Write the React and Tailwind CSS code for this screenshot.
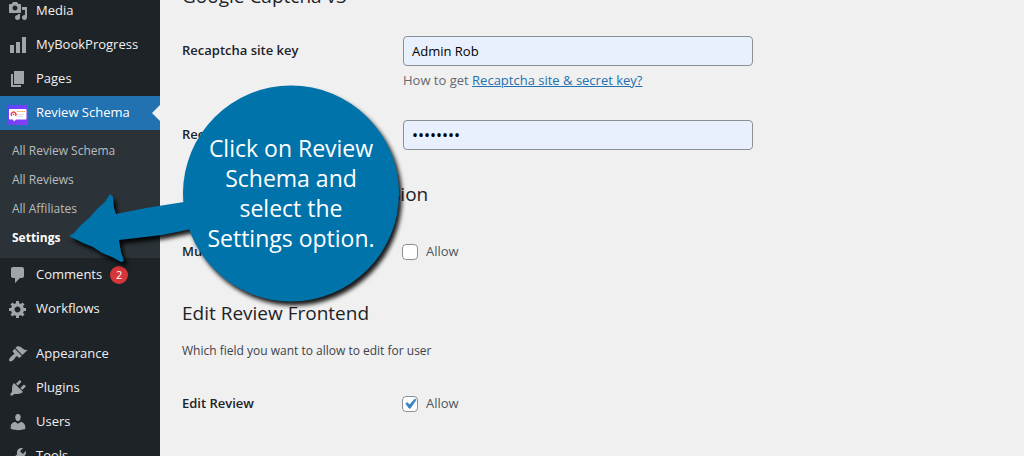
import { useState } from "react";
import clsx from "clsx";

const ICONS = {
    media: "M13 11V4c0-.55-.45-1-1-1h-1.67L9 1H5L3.67 3H2c-.55 0-1 .45-1 1v7c0 .55.45 1 1 1h10c.55 0 1-.45 1-1zM7 4.5c1.38 0 2.5 1.12 2.5 2.5S8.38 9.5 7 9.5 4.5 8.38 4.5 7 5.62 4.5 7 4.5zM14 6h5v10.5c0 1.38-1.12 2.5-2.5 2.5S14 17.88 14 16.5s1.12-2.5 2.5-2.5c.17 0 .34.02.5.05V9h-3V6zm-4 8.05V13h2v3.5c0 1.38-1.12 2.5-2.5 2.5S7 17.88 7 16.5 8.12 14 9.5 14c.17 0 .34.02.5.05z",
    chart: "M18 18V2h-4v16h4zm-6 0V7H8v11h4zm-6 0v-8H2v8h4z",
    page: "M6 15V2h10v13H6zm-1 1h8v2H3V5h2v11z",
    comments: "M5 2h9c1.1 0 2 .9 2 2v7c0 1.1-.9 2-2 2h-2l-5 5v-5H5c-1.1 0-2-.9-2-2V4c0-1.1.9-2 2-2z",
    generic: "M18 12h-2.18c-.17.7-.44 1.35-.81 1.93l1.54 1.54-2.1 2.1-1.54-1.54c-.58.36-1.23.63-1.91.79V19H8v-2.18c-.68-.16-1.33-.43-1.91-.79l-1.54 1.54-2.12-2.12 1.54-1.54c-.36-.58-.63-1.23-.79-1.91H1V9.03h2.17c.16-.7.44-1.35.8-1.94L2.43 5.55l2.1-2.1 1.54 1.54c.58-.37 1.24-.64 1.93-.81V2h3v2.18c.68.16 1.33.43 1.91.79l1.54-1.54 2.12 2.12-1.54 1.54c.36.59.64 1.24.8 1.94H18V12zm-8.5 1.5c1.66 0 3-1.34 3-3s-1.34-3-3-3-3 1.34-3 3 1.34 3 3 3z",
    appearance: "M14.48 11.06L7.41 3.99l1.5-1.5c.5-.56 2.3-.47 3.51.32 1.21.8 1.43 1.28 2.91 2.1 1.18.64 2.45 1.26 4.45.85zm-.71.71L6.7 4.7 4.93 6.47c-.39.39-.39 1.02 0 1.41l1.06 1.06c.39.39.39 1.03 0 1.42-.6.6-1.43 1.11-2.21 1.69-.35.26-.7.53-1.01.84C1.43 14.23.4 16.08 1.4 17.07c.99 1 2.84-.03 4.18-1.36.31-.31.58-.66.85-1.02.57-.78 1.08-1.61 1.69-2.21.39-.39 1.02-.39 1.41 0l1.06 1.06c.39.39 1.02.39 1.41 0z",
    plugins: "M13.11 4.36L9.87 7.6 8 5.73l3.24-3.24c.35-.34 1.05-.2 1.56.32.52.51.66 1.21.31 1.55zm-8 1.77l.91-1.12 9.01 9.01-1.19.84c-.71.71-2.63 1.16-3.82 1.16H6.14L4.9 17.26c-.59.59-1.54.59-2.12 0-.59-.58-.59-1.53 0-2.12l1.24-1.24v-3.88c0-1.13.4-3.19 1.09-3.89zm7.26 3.97l3.24-3.24c.34-.35 1.04-.21 1.55.31.52.51.66 1.21.31 1.55l-3.24 3.25z",
    users: "M10 9.25c-2.27 0-2.73-3.44-2.73-3.44C7 4.02 7.82 2 9.97 2c2.16 0 2.98 2.02 2.71 3.81 0 0-.41 3.44-2.68 3.44zm0 2.57L12.72 10c2.39 0 4.52 2.33 4.52 4.53v2.49s-3.65 1.13-7.24 1.13c-3.65 0-7.24-1.13-7.24-1.13v-2.49c0-2.25 1.94-4.48 4.47-4.48z",
    tools: "M16.68 9.77c-1.34 1.34-3.3 1.67-4.95.99l-5.41 6.52c-.99.99-2.59.99-3.58 0s-.99-2.59 0-3.57l6.52-5.42c-.68-1.65-.35-3.61.99-4.95 1.28-1.28 3.12-1.62 4.72-1.06l-2.89 2.89 2.82 2.82 2.86-2.87c.53 1.58.18 3.39-1.08 4.65zM3.81 16.21c.4.39 1.04.39 1.43 0 .4-.4.4-1.04 0-1.43-.39-.4-1.03-.4-1.43 0-.39.39-.39 1.03 0 1.43z",
};

const SUBMENU = ["All Review Schema", "All Reviews", "All Affiliates", "Settings"];

function SchemaIcon() {
    return (
        <svg viewBox="0 0 20 20" className="mt-1 size-5 shrink-0">
            <defs>
                <linearGradient id="schema-bg" x1="0" y1="0" x2="1" y2="1">
                    <stop offset="0" stopColor="#5b45ff" />
                    <stop offset="1" stopColor="#8a3df2" />
                </linearGradient>
            </defs>
            <rect width="20" height="20" fill="url(#schema-bg)" />
            <path d="M2 4h15.500a1 1 0 0 1 1 1v8.500a1 1 0 0 1-1 1H8l-2 2-1-2H2a1 1 0 0 1-1-1V5a1 1 0 0 1 1-1z" fill="#fff" />
            <path d="M3.800 10.800a2.300 2.300 0 1 1 3.600 0" fill="none" stroke="#f0424f" strokeWidth="1.400" />
            <circle cx="5.600" cy="9.500" r=".8" fill="#f0424f" />
            <path d="M9 6.500h8" stroke="#f7a53a" strokeWidth="1.200" strokeDasharray="1.200 .5" />
            <path d="M9 9.500h7M9 11.500h6" stroke="#dcdce6" strokeWidth="1" />
        </svg>
    );
}

function MenuItem({ icon, label, count, active }) {
    return (
        <a
            href="#"
            className={clsx(
                "relative flex h-[34px] items-center gap-2 pl-2 text-[13px]",
                active ? "bg-[#2271b1] text-white" : "text-[#f0f0f1]"
            )}
        >
            {icon ? (
                <svg viewBox="0 0 20 20" className="size-5 shrink-0" fill="#a0a5aa">
                    <path d={ICONS[icon]} />
                </svg>
            ) : (
                <SchemaIcon />
            )}
            <span>{label}</span>
            {count && (
                <span className="flex size-[18px] items-center justify-center rounded-full bg-[#d63638] text-[11px] text-white">
                    {count}
                </span>
            )}
            {active && (
                <span className="absolute right-0 top-1/2 -translate-y-1/2 border-y-8 border-r-8 border-y-transparent border-r-[#f0f0f0]" />
            )}
        </a>
    );
}

function Sidebar() {
    return (
        <nav className="-mt-1.5 w-40 shrink-0 bg-[#1d2327]">
            <MenuItem icon="media" label="Media" />
            <MenuItem icon="chart" label="MyBookProgress" />
            <MenuItem icon="page" label="Pages" />
            <MenuItem label="Review Schema" active />
            <ul className="bg-[#2c3338] py-1.5">
                {SUBMENU.map((item) => (
                    <li key={item}>
                        <a
                            href="#"
                            className={clsx(
                                "flex h-[29px] items-center pl-3 text-xs",
                                item === "Settings" ? "font-bold text-white" : "text-[#b9bcbe]"
                            )}
                        >
                            {item}
                        </a>
                    </li>
                ))}
            </ul>
            <MenuItem icon="comments" label="Comments" count={2} />
            <MenuItem icon="generic" label="Workflows" />
            <div className="h-[11px]" />
            <MenuItem icon="appearance" label="Appearance" />
            <MenuItem icon="plugins" label="Plugins" />
            <MenuItem icon="users" label="Users" />
            <MenuItem icon="tools" label="Tools" />
        </nav>
    );
}

function SectionTitle({ children, className }) {
    return <h2 className={clsx("text-[19px] leading-6 font-medium", className)}>{children}</h2>;
}

function FieldRow({ id, label, children }) {
    return (
        <div className="flex">
            <label htmlFor={id} className="flex h-[30px] w-[221px] shrink-0 items-center text-[13px] font-semibold text-[#1d2327]">
                {label}
            </label>
            <div className="flex-1">{children}</div>
        </div>
    );
}

function TextInput({ type, ...props }) {
    return (
        <input
            {...props}
            type={type}
            className={clsx(
                "block h-[30px] w-full max-w-[350px] rounded border border-[#8c8f94] bg-[#e8f0fe] px-2 text-black",
                type === "password" ? "text-base" : "text-[13px]"
            )}
        />
    );
}

function AllowBox({ id, checked, onChange }) {
    return (
        <div className="-ml-px flex h-[30px] items-center gap-2 text-[13px] text-[#50575e]">
            <span className="relative flex">
                <input
                    id={id}
                    type="checkbox"
                    checked={checked}
                    onChange={(e) => onChange(e.target.checked)}
                    className="size-4 appearance-none rounded border border-[#8c8f94] bg-white"
                />
                {checked && (
                    <svg viewBox="0 0 20 20" className="pointer-events-none absolute -left-0.5 -top-0.5 size-5">
                        <path d="M14.83 4.890l1.340.940-5.810 8.380H9.020L5.780 9.670l1.340-1.250 2.570 2.400z" fill="#3582c4" stroke="#3582c4" strokeWidth=".6" />
                    </svg>
                )}
            </span>
            <label htmlFor={id}>Allow</label>
        </div>
    );
}

// Speech bubble with an arrow, floats over the page
function Callout() {
    return (
        <div className="pointer-events-none absolute left-[60px] top-[80px] h-[240px] w-[350px]">
            <svg viewBox="60 80 350 240" className="absolute inset-0 size-full overflow-visible [filter:drop-shadow(3px_4px_2px_rgba(0,0,0,0.9))]" fill="#0073aa">
                <circle cx="291" cy="193.500" r="108" />
                <path d="M69 236l5-3 6-7 10-9 8-9 7-6 5-8 3 3 1 11 2 6 30-6 38-6 12 26-34 7-43 5 2 12 3 9-3 1-9-5-10-4-9-6-10-4z" />
            </svg>
            <p className="relative ml-[123px] mt-[53px] w-[216px] text-center text-[23px] leading-[30px] text-white">
                Click on Review
                <br />
                Schema and
                <br />
                select the
                <br />
                Settings option.
            </p>
        </div>
    );
}

export default function App() {
    const [siteKey, setSiteKey] = useState("Admin Rob");
    const [secretKey, setSecretKey] = useState("password");
    const [multi, setMulti] = useState(false);
    const [editReview, setEditReview] = useState(true);

    return (
        <div className="relative flex h-screen overflow-hidden bg-[#f0f0f0] font-['Open_Sans','Noto_Sans',sans-serif]">
            <Sidebar />

            <main className="-mt-4 flex-1 pl-[22px] text-[#1d2327]">
                <SectionTitle>Google Captcha v3</SectionTitle>

                <div className="mt-7">
                    <FieldRow id="site-key" label="Recaptcha site key">
                        <TextInput id="site-key" type="text" value={siteKey} onChange={(e) => setSiteKey(e.target.value)} />
                        <p className="mt-1 text-[13px] leading-5 text-[#646970]">
                            How to get{" "}
                            <a href="#" className="text-[#2271b1] underline">Recaptcha site &amp; secret key?</a>
                        </p>
                    </FieldRow>
                </div>

                <div className="mt-[30px]">
                    <FieldRow id="secret-key" label="Recaptcha secret key">
                        <TextInput id="secret-key" type="password" value={secretKey} onChange={(e) => setSecretKey(e.target.value)} />
                    </FieldRow>
                </div>

                <SectionTitle className="mt-8">Multiple Review Submission</SectionTitle>

                <div className="mt-[31px]">
                    <FieldRow id="multi" label="Multiple Review">
                        <AllowBox id="multi" checked={multi} onChange={setMulti} />
                    </FieldRow>
                </div>

                <SectionTitle className="mt-[34px]">Edit Review Frontend</SectionTitle>
                <p className="mt-4 text-xs leading-5 text-[#3c434a]">Which field you want to allow to edit for user</p>

                <div className="mt-7">
                    <FieldRow id="edit-review" label="Edit Review">
                        <AllowBox id="edit-review" checked={editReview} onChange={setEditReview} />
                    </FieldRow>
                </div>
            </main>

            <Callout />
        </div>
    );
}
